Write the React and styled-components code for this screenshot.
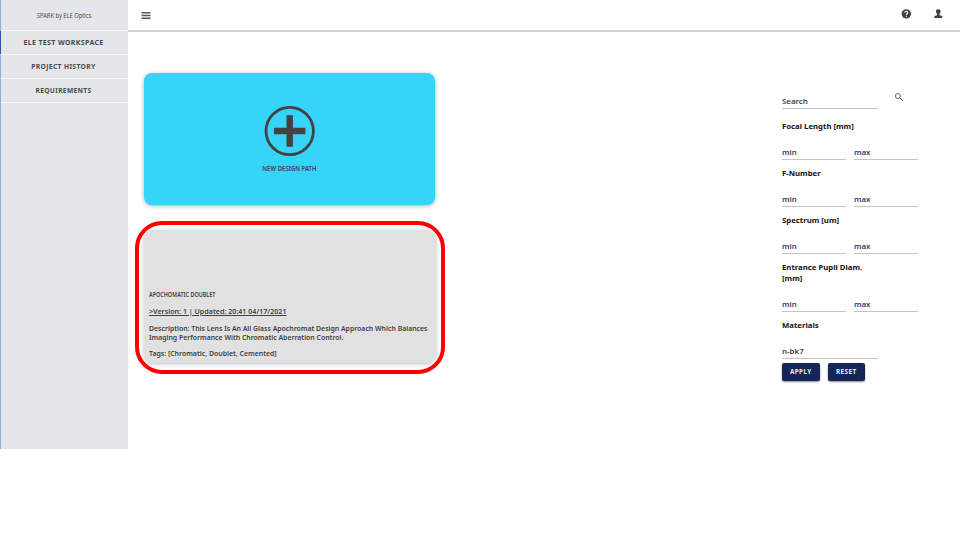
import React from 'react';
import styled, { createGlobalStyle } from 'styled-components';

const GlobalStyle = createGlobalStyle`
  * { box-sizing: border-box; }
  body { margin: 0; background: #fff; font-family: "Noto Sans", "Open Sans", sans-serif; }
`;

const Page = styled.div`
  display: grid;
  grid-template-columns: 128px 1fr;
  width: 960px;
  height: 449px;
  overflow: hidden;
`;

const Sidebar = styled.nav`
  background: #e5e6e8;
  border-left: 1px solid #8baee2;
`;

const Brand = styled.div`
  height: 30px;
  display: flex;
  align-items: center;
  justify-content: center;
  padding: 0 1px 1px 0;
  font-size: 7.2px;
  color: #4a4a4a;
`;

const NavItem = styled.div`
  height: 24px;
  margin-left: -1px;
  border-top: 1px solid #f5f6f7;
  border-left: 1px solid ${(p) => (p.$active ? '#2d55a5' : '#8baee2')};
  display: flex;
  align-items: center;
  justify-content: center;
  padding-right: 2px;
  font-size: 7px;
  font-weight: 700;
  letter-spacing: 0.36px;
  color: #4a4a4a;
`;

const NavEnd = styled.div`
  height: 1px;
  background: #f5f6f7;
`;

const Label = styled.span`
  display: block;
  white-space: nowrap;
  transform: scaleX(${(p) => p.$stretch || 1});
  transform-origin: ${(p) => p.$origin || 'center'};
`;

const Main = styled.main`
  display: flex;
  flex-direction: column;
`;

const Topbar = styled.header`
  height: 30px;
  display: flex;
  align-items: center;
  padding: 0 17px 2px 13px;
  color: #424242;
  box-shadow: 0 1px 0 #d2d2d2, 0 2px 0 #d4d4d4;
  clip-path: inset(0 0 -4px 0);
  flex: none;
`;

const MenuIcon = styled.svg`
  display: block;
  width: 10px;
  height: 10px;
  margin-top: 3px;
  fill: #555;
`;

const TopActions = styled.div`
  display: flex;
  gap: 22px;
  margin-left: auto;
`;

const Icon = styled.svg`
  display: block;
  width: ${(p) => p.$size}px;
  height: ${(p) => p.$size}px;
  fill: currentColor;
  flex: none;
`;

const Content = styled.div`
  display: flex;
  justify-content: space-between;
  padding: 43px 42px 0 16px;
`;

const Cards = styled.div`
  width: 291px;
`;

const NewCard = styled.section`
  height: 132px;
  padding: 32px 0 0;
  border-radius: 8px;
  background: #37d4fa;
  box-shadow: 0 1px 4px rgba(30, 40, 90, 0.38);
  display: flex;
  flex-direction: column;
  align-items: center;
  color: #424242;
  font-size: 6.5px;
  font-weight: 600;
`;

const PlusLabel = styled.div`
  height: 10px;
  margin-top: 7px;
  line-height: 10px;
`;

const Highlight = styled.div`
  width: 310px;
  height: 153px;
  margin: 16px 0 0 -9px;
  padding: 5px 5px 0;
  border: 4px solid #ff0000;
  border-radius: 27px;
`;

const DesignCard = styled.section`
  width: 292px;
  height: 133px;
  padding: 60px 5px 0;
  border-radius: 9px;
  background: #e1e1e1;
  box-shadow: 0 1px 4px rgba(35, 55, 85, 0.32);
  color: #424242;
  font-size: 7px;
  font-weight: 600;
  line-height: 9px;
`;

const CardTitle = styled.div`
  font-size: 6.4px;
  margin-bottom: 8px;
`;

const CardLine = styled.div`
  margin-bottom: ${(p) => p.$gap || 0}px;
`;

const Version = styled.span`
  text-decoration: underline;
  text-decoration-thickness: 1px;
  text-underline-offset: 1px;
`;

const Filters = styled.form`
  width: 136px;
  padding-top: 19px;
  font-size: 7.5px;
  line-height: 11px;
`;

const SearchRow = styled.div`
  display: flex;
  gap: 16px;
  color: #424242;
`;

const Field = styled.div`
  width: ${(p) => p.$width}px;
  height: 17px;
  padding-top: 4px;
  border-bottom: 1px solid #c4c4c4;
  color: #424242;
  font-size: 7.5px;
  font-weight: 600;
`;

const FilterTitle = styled.div`
  margin-top: ${(p) => p.$top ?? 8}px;
  color: #111;
  font-weight: 700;
`;

const Range = styled.div`
  display: flex;
  gap: 8px;
  margin-top: 11px;
`;

const MaterialRow = styled.div`
  margin-top: 11px;
`;

const Buttons = styled.div`
  display: flex;
  gap: 8px;
  margin-top: 4px;
`;

const Button = styled.button`
  width: 37.5px;
  height: 18px;
  padding: 0;
  border: 0;
  border-radius: 2px;
  background: #132657;
  box-shadow: 0 1px 2px rgba(0, 0, 0, 0.45);
  color: #eceef4;
  font: 700 6.3px/18px "Noto Sans", sans-serif;
  letter-spacing: 0.45px;
`;

function Title({ children, top }) {
  return (
    <FilterTitle $top={top}>
      <Label $stretch={1.035} $origin="left">{children}</Label>
    </FilterTitle>
  );
}

function MinMax() {
  return (
    <Range>
      <Field $width={64}><Label $stretch={1.04} $origin="left">min</Label></Field>
      <Field $width={64}><Label $stretch={1.04} $origin="left">max</Label></Field>
    </Range>
  );
}

export default function App() {
  return (
    <>
      <GlobalStyle />
      <Page>
        <Sidebar>
          <Brand><Label $stretch={0.8}>SPARK by ELE Optics</Label></Brand>
          <NavItem $active><Label>ELE TEST WORKSPACE</Label></NavItem>
          <NavItem><Label $stretch={0.96}>PROJECT HISTORY</Label></NavItem>
          <NavItem><Label $stretch={0.95}>REQUIREMENTS</Label></NavItem>
          <NavEnd />
        </Sidebar>
        <Main>
          <Topbar>
            <MenuIcon viewBox="0 0 10 10">
              <path d="M.5 1h9v1.4h-9zM.5 3.8h9v1.4h-9zM.5 6.6h9v1.4h-9z" />
            </MenuIcon>
            <TopActions>
              <Icon $size={10} viewBox="0 0 10 10">
                <circle cx="5.3" cy="4.9" r="4.7" />
                <path d="M3.8 3.8C3.8 1.8 6.9 1.8 6.9 3.6C6.9 4.8 5.4 4.7 5.4 6M5.4 6.8v1" fill="none" stroke="#fff" strokeWidth="1.1" />
              </Icon>
              <Icon $size={10} viewBox="0 0 10 10">
                <path d="M5.3.3C3.3.3 2.8 1.5 3 2.8c.1 1 .6 1.8 1.1 2.3v1.1L1.9 6.8Q1.2 7 1.2 9.1h8.2Q9.4 7 8.7 6.8L6.5 6.2V5.1c.5-.5 1-1.3 1.1-2.3C7.8 1.5 7.3.3 5.3.3z" />
              </Icon>
            </TopActions>
          </Topbar>
          <Content>
            <Cards>
              <NewCard>
                <Icon $size={52} viewBox="0 0 52 52">
                  <circle cx="25.7" cy="26" r="23.7" fill="none" stroke="currentColor" strokeWidth="2.8" />
                  <path d="M22.5 10.3h6.4v12.5h12.5v6.4H28.9v12.5h-6.4V29.2H10v-6.4h12.5z" />
                </Icon>
                <PlusLabel><Label $stretch={0.92}>NEW DESIGN PATH</Label></PlusLabel>
              </NewCard>
              <Highlight>
                <DesignCard>
                  <CardTitle><Label $stretch={0.85} $origin="left">APOCHOMATIC DOUBLET</Label></CardTitle>
                  <CardLine $gap={8}><Label $stretch={1.015} $origin="left"><Version>&gt;Version: 1 | Updated: 20:41 04/17/2021</Version></Label></CardLine>
                  <CardLine><Label $stretch={0.985} $origin="left">Description: This Lens Is An All Glass Apochromat Design Approach Which Balances</Label></CardLine>
                  <CardLine $gap={7}><Label $stretch={0.985} $origin="left">Imaging Performance With Chromatic Aberration Control.</Label></CardLine>
                  <CardLine><Label $stretch={0.99} $origin="left">Tags: [Chromatic, Doublet, Cemented]</Label></CardLine>
                </DesignCard>
              </Highlight>
            </Cards>
            <Filters>
              <SearchRow>
                <Field $width={96.4}><Label $stretch={1.05} $origin="left">Search</Label></Field>
                <Icon $size={10} viewBox="0 0 10 10">
                  <circle cx="3.9" cy="4" r="2.5" fill="none" stroke="currentColor" strokeWidth=".8" />
                  <path d="M5.7 5.8L8.7 8.8" stroke="currentColor" strokeWidth="1" />
                </Icon>
              </SearchRow>
              <Title top={12}>Focal Length [mm]</Title>
              <MinMax />
              <Title>F-Number</Title>
              <MinMax />
              <Title>Spectrum [um]</Title>
              <MinMax />
              <Title>Entrance Pupil Diam.<br />[mm]</Title>
              <MinMax />
              <Title>Materials</Title>
              <MaterialRow><Field $width={96.4}><Label $stretch={1.06} $origin="left">n-bk7</Label></Field></MaterialRow>
              <Buttons>
                <Button type="button">APPLY</Button>
                <Button type="button">RESET</Button>
              </Buttons>
            </Filters>
          </Content>
        </Main>
      </Page>
    </>
  );
}
